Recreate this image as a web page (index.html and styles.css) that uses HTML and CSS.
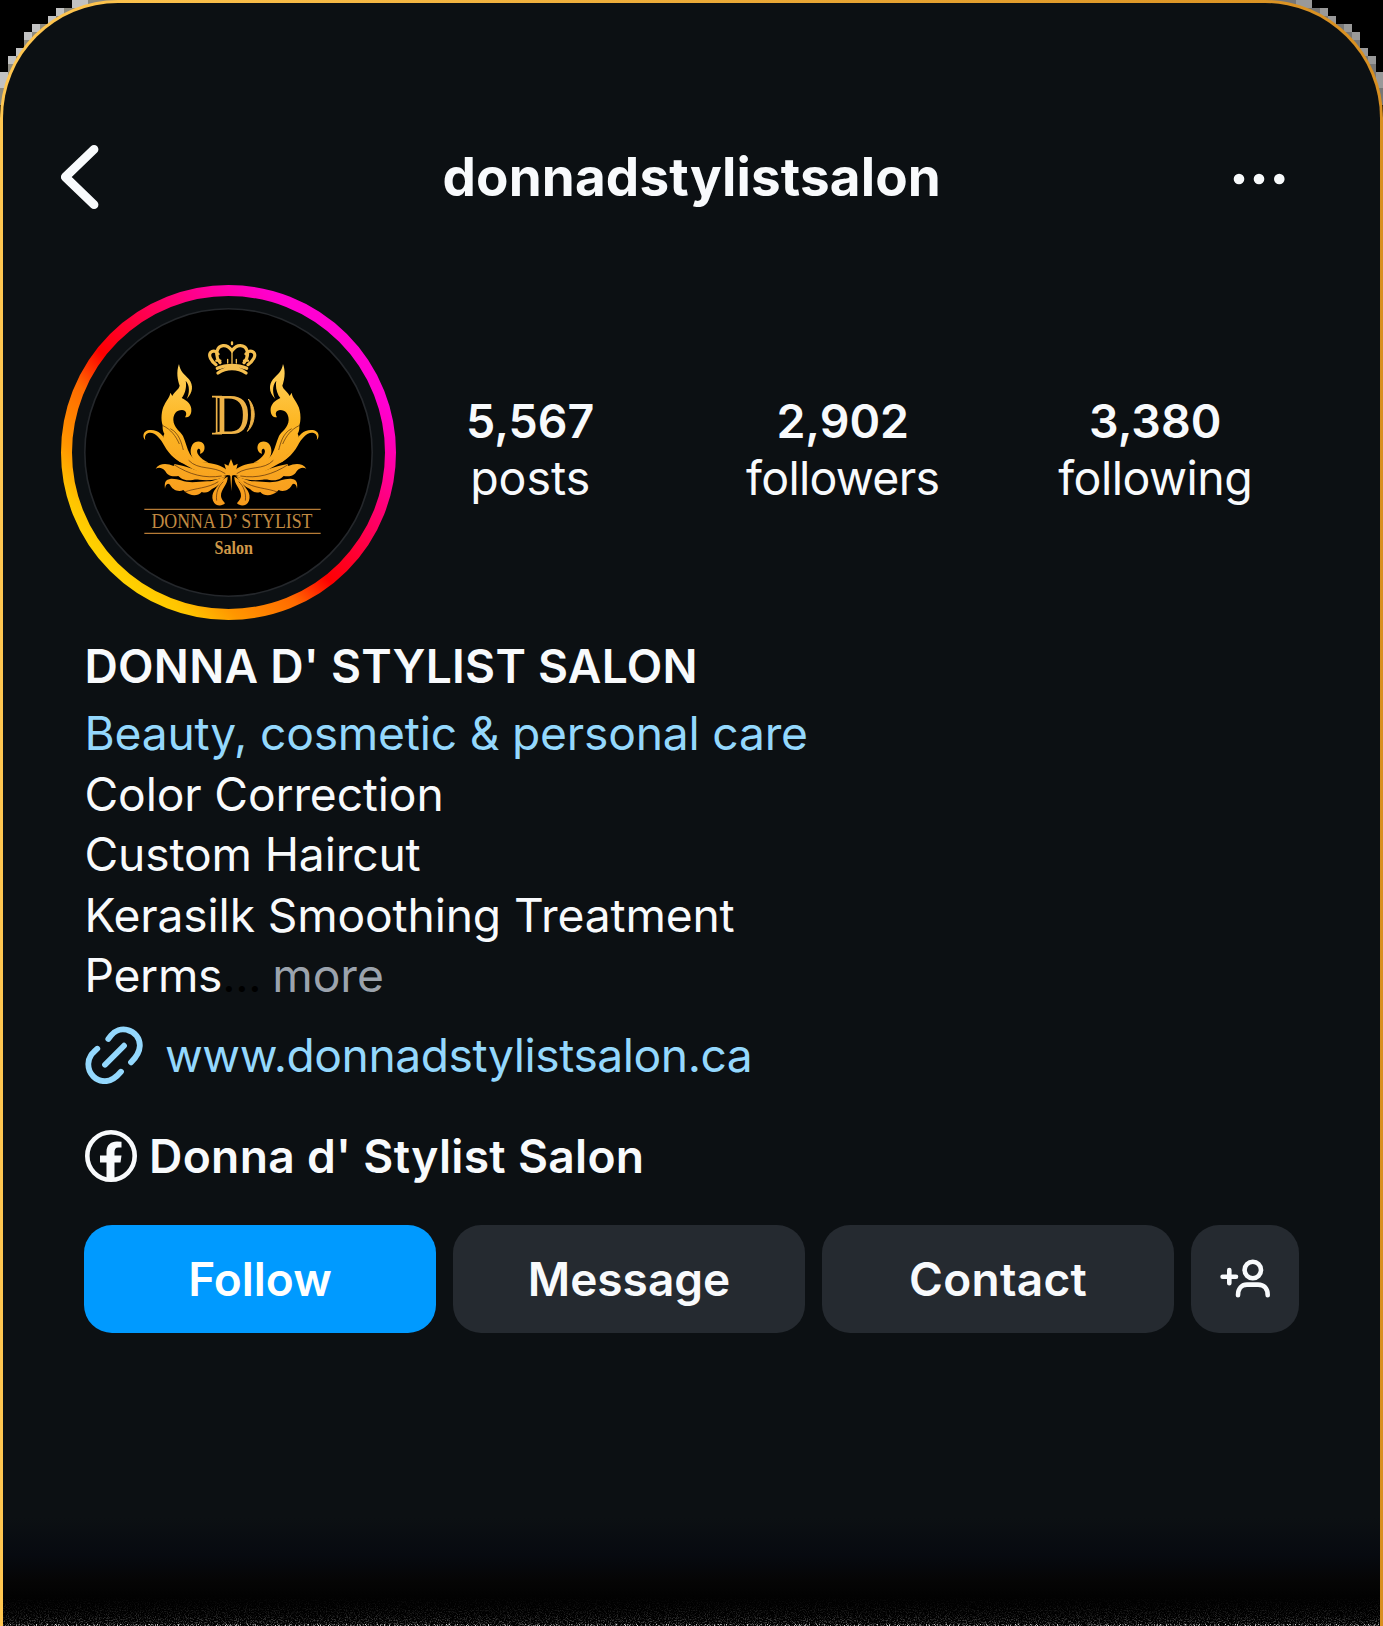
FILE: index.html
```
<!DOCTYPE html>
<html lang="en">
<head>
<meta charset="utf-8">
<title>donnadstylistsalon</title>
<link rel="stylesheet" href="styles.css">
</head>
<body>
<svg class="corners" viewBox="0 0 1383 120" aria-hidden="true">
  <path fill="#c2c2c2" d="M120 0H72V8H56V16H48V24H32V32H24V48H16V56H8V72H0V105H120Z"/>
  <path fill="#8c8a80" d="M120 0H88V8H64V16H56V24H40V32H32V40H24V56H16V64H8V88H0V105H120Z"/>
  <path fill="#999" d="M1260 0H1312V8H1328V16H1336V24H1352V32H1360V48H1368V56H1376V72H1383V105H1260Z"/>
  <path fill="#777" d="M1260 0H1296V8H1320V16H1328V24H1344V32H1352V40H1360V56H1368V64H1376V88H1383V105H1260Z"/>
</svg>
<main class="card">
  <header class="topbar">
    <svg class="back" viewBox="0 0 40 66" fill="none" stroke="#f8fafc" stroke-width="8.800" stroke-linecap="round" stroke-linejoin="round"><path d="M34 5.300 5.300 33 34 60.700"/></svg>
    <h1 class="title">donnadstylistsalon</h1>
    <svg class="dots" viewBox="0 0 52 12" fill="#f8fafc"><circle cx="6" cy="6" r="5.300"/><circle cx="26" cy="6" r="5.300"/><circle cx="46.300" cy="6" r="5.300"/></svg>
  </header>

  <section class="summary">
    <svg class="avatar" viewBox="61 285 335 335">
      <defs>
        <linearGradient id="ring" gradientUnits="userSpaceOnUse" x1="114" y1="567" x2="343" y2="338">
          <stop offset="0" stop-color="#ffd000"/><stop offset=".06" stop-color="#ffc400"/><stop offset=".16" stop-color="#ff9600"/><stop offset=".32" stop-color="#ff6a00"/><stop offset=".44" stop-color="#ff0000"/><stop offset=".66" stop-color="#ff0060"/><stop offset=".84" stop-color="#ff00a8"/><stop offset=".95" stop-color="#ff00d2"/>
        </linearGradient>
        <linearGradient id="gold" gradientUnits="userSpaceOnUse" x1="0" y1="100" x2="0" y2="530">
          <stop offset="0" stop-color="#ffd25e"/><stop offset=".4" stop-color="#fdb724"/><stop offset="1" stop-color="#f79a1c"/>
        </linearGradient>
        <g id="wing">
          <path d="M147 102C151 126 163 132 177 148C191 166 189 188 170 207C179 190 180 166 167 152C171 170 165 192 155 204C171 211 186 224 184 243C183 256 176 263 165 262C172 252 169 241 156 240C139 240 130 252 130 270C131 293 151 304 159 318C167 335 170 355 180 373C194 396 222 397 252 402C277 407 295 420 301 436L286 435C261 440 230 437 205 425C180 414 165 402 148 395L134 383L136 377C117 362 103 340 100 319L103 311C97 302 98 291 98 286C92 269 94 240 103 225C108 213 120 201 121 188L127 198C131 186 146 180 149 167C143 150 138 126 147 102Z"/>
          <path d="M205 398C183 387 176 363 187 344C196 331 216 332 222 344C227 357 220 370 210 371C213 360 209 355 204 357C195 365 208 386 236 398Z"/>
          <path d="M46 331C35 320 40 302 57 300C84 297 99 314 109 336C119 359 138 383 172 403C142 395 119 376 103 347C91 325 73 304 55 309C46 312 43 321 46 331Z"/>
          <path d="M77 416C88 398 112 399 131 408L133 402C172 408 199 423 230 431C253 437 274 431 291 437C267 449 235 453 207 449C188 447 173 457 153 445L145 438C122 442 111 433 105 422C94 411 86 412 77 416Z"/>
          <path d="M105 476C103 460 105 449 120 447C130 445 144 449 153 451C182 462 207 454 233 454C255 453 270 443 286 440C276 453 266 468 246 477C238 484 230 491 215 486C203 500 180 497 166 486L160 480C144 488 125 477 120 464C112 457 106 465 105 476Z"/>
          <path d="M293 440C294 464 272 477 273 498C274 509 281 513 285 520C275 530 256 529 249 512C241 488 260 474 268 461C276 449 285 443 293 440Z"/>
          <g fill="none" stroke="#50280a" stroke-width="2"><path d="M99 287C123 299 137 317 148 342M121 296C149 310 155 343 160 360M176 391C205 422 250 406 286 431M132 404C178 434 224 446 275 438M164 486C195 474 235 475 265 455M280 455C265 468 257 489 260 512"/></g>
        </g>
      </defs>
      <circle cx="228.500" cy="452.500" r="162" fill="none" stroke="url(#ring)" stroke-width="11"/>
      <circle cx="228.500" cy="452.500" r="143.700" fill="#000" stroke="#24272b" stroke-width="1.600"/>
      <g transform="translate(130 330) scale(.33333)">
        <g fill="url(#gold)"><use href="#wing"/><use href="#wing" transform="matrix(-1 0 0 1 606 0)"/>
          <path d="M303 387L311 407L323 401L318 423L306 438L304 484L301 438L289 423L283 401L295 407Z"/></g>
        <g fill="none" stroke="#f5bf4f" stroke-width="9.500" stroke-linecap="round">
          <path d="M264 129C289 111 323 111 348 129M262 115C289 103 323 103 350 115" stroke-width="10"/>
          <path d="M258 104C243 93 234 76 242 67C250 59 260 65 264 72M354 104C369 93 380 76 371 67C363 59 353 65 348 72M270 98C252 74 261 49 279 47C294 45 302 57 306 62C310 57 319 45 333 47C352 49 361 74 342 98"/>
          <path d="M306 62V100M293 88V99M319 88V99" stroke-width="4"/><path d="M306 37V42M259 92H271M342 92H354" stroke-width="7"/>
        </g>
        <path d="M355 207C379 230 379 281 352 304C368 280 368 230 355 207Z" fill="#eeb247" stroke="#eeb247" stroke-width="3"/>
        <path d="M246 200H276M246 311H276M260 199V312" stroke="#eeb247" stroke-width="5"/>
        <path d="M43 538H572M43 610H572" stroke="#b67b36" stroke-width="4"/>
      </g>
      <text class="mono" x="214" y="434" textLength="36" lengthAdjust="spacingAndGlyphs">D</text>
      <text class="brand" x="151.500" y="528" textLength="161" lengthAdjust="spacingAndGlyphs">DONNA D’ STYLIST</text>
      <text class="kind" x="214.500" y="554" textLength="38.500" lengthAdjust="spacingAndGlyphs">Salon</text>
    </svg>
    <div class="stats">
      <div class="stat"><strong>5,567</strong><span>posts</span></div>
      <div class="stat"><strong>2,902</strong><span class="followers">followers</span></div>
      <div class="stat"><strong>3,380</strong><span class="following">following</span></div>
    </div>
  </section>

  <section class="bio">
    <h2 class="name">DONNA D' STYLIST SALON</h2>
    <p class="category">Beauty, cosmetic &amp; personal care</p>
    <p class="service">Color Correction</p>
    <p class="service">Custom Haircut</p>
    <p class="service">Kerasilk Smoothing Treatment</p>
    <p class="last"><span>Perms</span><span class="ellipsis">...</span><span class="more">more</span></p>
  </section>

  <a class="website">
    <svg class="link-icon" viewBox="0 0 58 58" fill="none" stroke="#94d8fd" stroke-width="5.800" stroke-linecap="round"><path d="M23.300 13 26 9.500C30 4.500 36.500 2.400 42 3.800C50 5.500 55.200 12.500 54.800 20C54.500 27 50.500 32 46 36.300M12.300 22.700C7 27.500 3.300 31 3.300 38C3.300 48 11 55.200 20 55.200C27.500 55.200 32.500 50 36 45.700M20 38.700 39 19.700"/></svg>
    <span class="url">www.donnadstylistsalon.ca</span>
  </a>

  <a class="facebook">
    <svg class="fb-icon" viewBox="0 0 52 52"><circle cx="26" cy="26" r="23.700" fill="none" stroke="#f8fafc" stroke-width="4.600"/><path fill="#f8fafc" d="M21.500 50V32.500H15V25.500H21.500V22C21.500 15 25.500 11.500 32 11.500L36.500 11.800V17.500H33.500C30.500 17.500 29.500 19.500 29.500 22V25.500H36.500L35.500 32.500H29.500V50Z"/></svg>
    <span class="fb-name">Donna d' Stylist Salon</span>
  </a>

  <nav class="actions">
    <button class="btn follow">Follow</button>
    <button class="btn">Message</button>
    <button class="btn contact">Contact</button>
    <button class="btn add" aria-label="Suggested">
      <svg viewBox="0 0 50 40" fill="none" stroke="#f8fafc" stroke-width="4.600" stroke-linecap="round" stroke-linejoin="round"><circle cx="32.800" cy="11" r="8.200"/><path d="M18 36.200C18 29 22 25.600 27 25.600H38C44 25.600 47.700 29.500 47.700 36.200M2.600 17.700H16M9.300 11V24.300"/></svg>
    </button>
  </nav>
  <svg class="grain" viewBox="0 0 1380 30" aria-hidden="true">
    <defs><filter id="noise" x="0" y="0" width="100%" height="100%"><feTurbulence type="fractalNoise" baseFrequency=".9" numOctaves="2" seed="4"/><feColorMatrix values="0 0 0 0 .62  0 0 0 0 .62  0 0 0 0 .62  4 0 0 0 -1.900"/></filter>
    <linearGradient id="fade" x2="0" y2="1"><stop offset="0" stop-color="#000"/><stop offset=".6" stop-color="#222"/><stop offset="1" stop-color="#555"/></linearGradient>
    <mask id="rise"><rect width="1380" height="28" fill="url(#fade)"/><rect y="28" width="1380" height="2" fill="#fff"/></mask></defs>
    <g mask="url(#rise)"><rect width="1380" height="30" filter="url(#noise)"/></g>
  </svg>
</main>
</body>
</html>
```
FILE: styles.css
```
* { box-sizing: border-box; }
body { margin: 0; background: #000; color: #f8fafc; font-family: Inter, "Liberation Sans", sans-serif; }
h1, h2, p { margin: 0; }
svg { display: block; }
.corners { position: absolute; left: 0; top: 0; width: 1383px; height: 120px; }
.card {
  position: relative;
  width: 1383px;
  height: 1626px;
  overflow: hidden;
  border: 3px solid transparent;
  border-bottom: 0;
  border-radius: 118px 118px 0 0;
  background:
    linear-gradient(#0c1013 0, #0c1013 1515px, #070a10 1552px, #050505 1578px, #000 1605px) padding-box,
    linear-gradient(90deg, #ffc650, #d88f20) border-box;
}
.topbar { display: grid; grid-template-columns: 40px 1fr 52px; align-items: center; height: 70px; margin: 139px 95px 0 57px; }
.back { width: 40px; height: 66px; margin-top: -1px; }
.title { justify-self: center; margin-left: 50.500px; font-size: 53px; line-height: 70px; font-weight: 700; letter-spacing: .12px; white-space: nowrap; }
.dots { width: 52px; height: 12px; margin-top: 4px; }
.summary { display: flex; margin: 70px 0 0 58px; height: 338px; }
.avatar { flex: none; width: 335px; height: 335px; margin-top: 3px; }
.mono, .brand, .kind { font-family: "Liberation Serif", serif; }
.mono { font-size: 58px; fill: #eeb247; }
.brand { font-size: 20px; fill: #c18a42; }
.kind { font-size: 18px; font-weight: 700; fill: #cf9848; }
.stats { display: grid; grid-template-columns: repeat(3, 312.500px); margin: 111px 0 0 -22px; height: 120px; }
.stat { display: flex; flex-direction: column; align-items: center; font-size: 46.500px; line-height: 57px; }
.stat strong { font-weight: 600; }
.followers { letter-spacing: -.7px; }
.following { letter-spacing: -.5px; }
.bio { margin: 13px 0 0 81.500px; font-size: 46.200px; line-height: 60.600px; white-space: nowrap; }
.name { font-size: inherit; font-weight: 600; line-height: 67px; letter-spacing: .24px; margin-bottom: 3px; }
.category { color: #94d8fd; letter-spacing: -.2px; }
.service { letter-spacing: -.15px; }
.last { letter-spacing: -.3px; }
.ellipsis { color: #000; }
.more { color: #9ba3ad; margin-left: 11px; letter-spacing: 0; }
.website { display: flex; align-items: center; height: 60px; margin: 19px 0 0 82px; color: #94d8fd; font-size: 46.200px; letter-spacing: -.45px; }
.link-icon { width: 58px; height: 58px; margin-right: 22px; }
.facebook { display: flex; align-items: center; height: 60px; margin: 41px 0 0 82px; font-size: 46.200px; font-weight: 600; letter-spacing: .3px; }
.fb-icon { width: 52px; height: 52px; margin-right: 12px; }
.actions { display: grid; grid-template-columns: 352px 352px 352px 108px; column-gap: 17px; margin: 39px 0 0 81px; }
.btn { display: flex; align-items: center; justify-content: center; height: 108px; padding: 0; border: 0; border-radius: 28px; background: #252a30; color: #f8fafc; font: 600 46px Inter, "Liberation Sans", sans-serif; }
.follow { background: #009aff; color: #fff; }
.contact { letter-spacing: .3px; }
.add svg { width: 50px; height: 40px; }
.grain { position: absolute; left: 0; bottom: 0; width: 1380px; height: 30px; }
```
